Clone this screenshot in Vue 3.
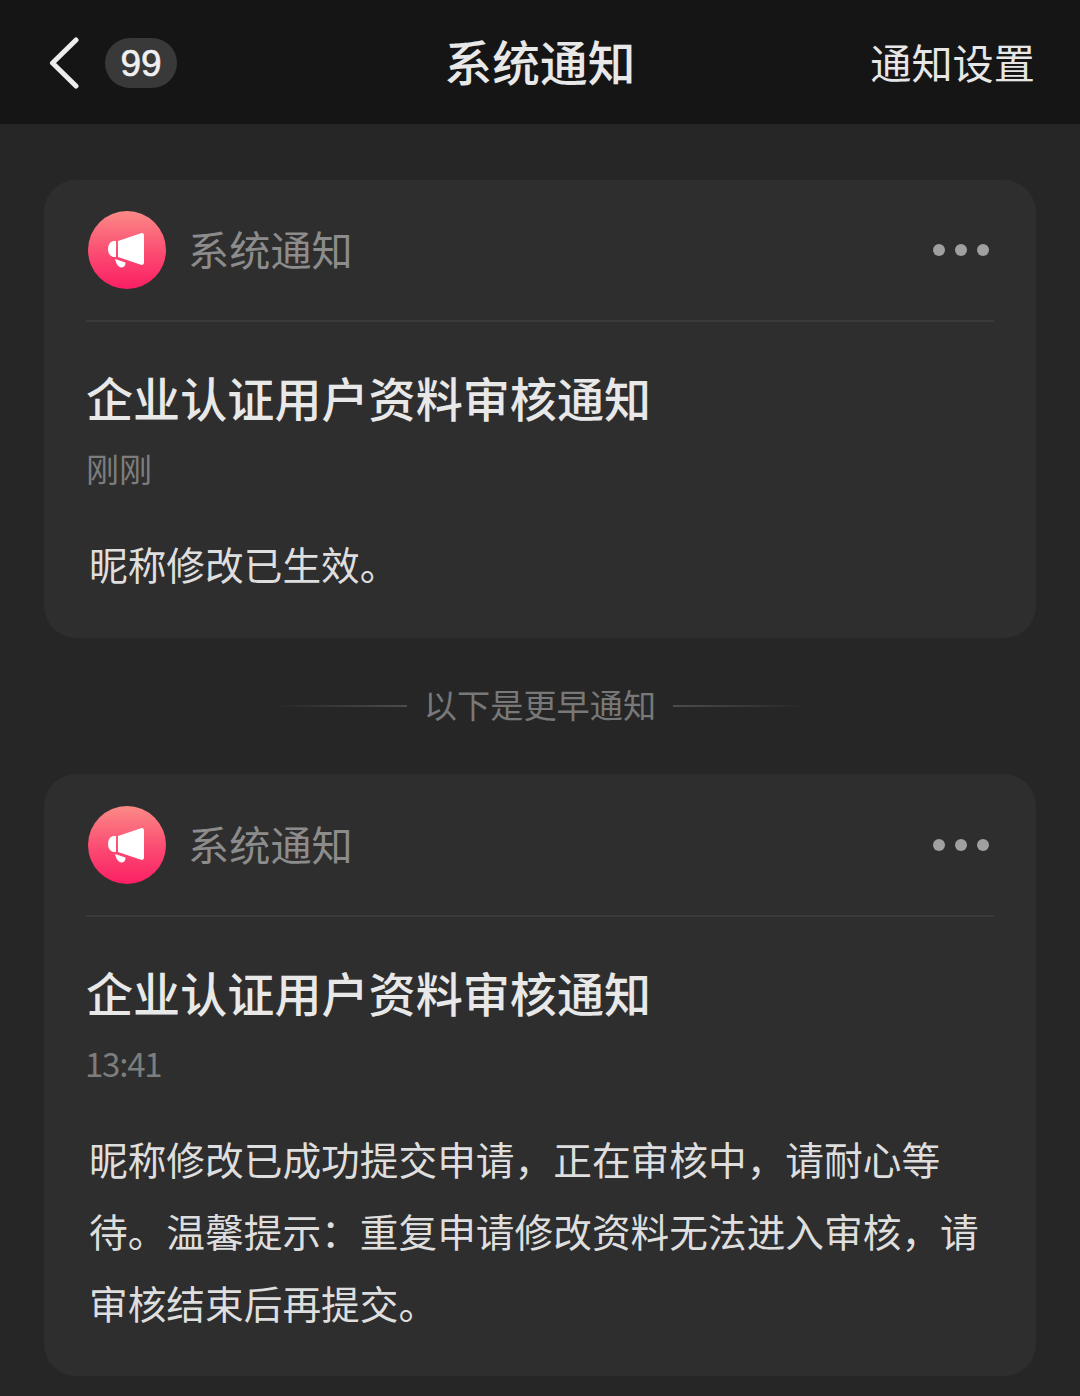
<template>
  <div class="page">
    <header class="topbar">
      <div class="left">
        <svg class="back" width="30" height="52" viewBox="0 0 30 52">
          <path d="M27 3 L3.5 26 L27 49" fill="none" stroke="#ededed" stroke-width="5" stroke-linecap="round" stroke-linejoin="round" />
        </svg>
        <span class="badge">99</span>
      </div>
      <div class="title">系统通知</div>
      <div class="settings">通知设置</div>
    </header>

    <template v-for="(n, i) in notices" :key="i">
      <section class="card">
        <div class="card-head">
          <div class="avatar">
            <svg width="40" height="40" viewBox="0 0 40 40">
              <path d="M11 11 L34 3.2 Q37 2.6 37 5.5 L37 32.5 Q37 35.4 34 34.8 L11 27 Z" fill="#fff" />
              <path d="M9 11 L9 27 L6 27 Q1 25 1 19 Q1 13 6 11 Z" fill="#fff" />
              <path d="M8 29 L18.5 32.5 Q18.5 37.5 14 37.5 Q10 37 8 29 Z" fill="#fff" />
            </svg>
          </div>
          <span class="source">系统通知</span>
          <div class="dots"><i></i><i></i><i></i></div>
        </div>
        <h2 class="notice-title">企业认证用户资料审核通知</h2>
        <div :class="['time', { digits: n.time.includes(':') }]">{{ n.time }}</div>
        <p class="body">{{ n.body }}</p>
      </section>
      <div v-if="i === 0" class="divider">
        <span class="line line-l"></span>
        <span class="divider-text">以下是更早通知</span>
        <span class="line line-r"></span>
      </div>
    </template>
  </div>
</template>

<script setup>
const notices = [
  { time: '刚刚', body: '昵称修改已生效。' },
  {
    time: '13:41',
    body: '昵称修改已成功提交申请，正在审核中，请耐心等待。温馨提示：重复申请修改资料无法进入审核，请审核结束后再提交。',
  },
];
</script>

<style>
html, body {
  margin: 0;
  background: #262626;
}
</style>

<style scoped>
.page {
  width: 1080px;
  height: 1396px;
  overflow: hidden;
  background: #262626;
  font-family: "Noto Sans CJK SC", "Liberation Sans", sans-serif;
}

.topbar {
  height: 124px;
  background: #151515;
  display: flex;
  align-items: center;
  justify-content: space-between;
  padding: 0 45px 0 49px;
  position: relative;
}

.left {
  display: flex;
  align-items: center;
  gap: 26px;
  margin-top: 2px;
}

.back {
  display: block;
}

.badge {
  width: 72px;
  height: 50px;
  box-sizing: border-box;
  padding-top: 1px;
  border-radius: 25px;
  background: #393939;
  color: #f0f0f0;
  font-family: "Liberation Sans", sans-serif;
  font-size: 37px;
  font-weight: 500;
  display: flex;
  align-items: center;
  justify-content: center;
  -webkit-text-stroke: 0.6px #f0f0f0;
}

.title {
  position: absolute;
  left: 0;
  right: 0;
  top: 27px;
  line-height: 68px;
  text-align: center;
  font-size: 47.7px;
  font-weight: 500;
  color: #e8e8e8;
  pointer-events: none;
}

.settings {
  font-size: 41.2px;
  line-height: 60px;
  margin-bottom: 2px;
  font-weight: 400;
  color: #e6e6e6;
}

.card {
  width: 992px;
  margin: 56px 0 0 44px;
  box-sizing: border-box;
  background: #2e2e2e;
  border-radius: 32px;
  padding: 30px 42px 39px;
}

.divider + .card {
  margin-top: 0;
  padding-top: 31px;
  padding-bottom: 38px;
}

.card-head {
  display: flex;
  align-items: center;
  height: 112px;
  padding-bottom: 30px;
  box-sizing: border-box;
  border-bottom: 2px solid #3a3a3a;
}

.avatar {
  width: 78px;
  height: 78px;
  border-radius: 50%;
  margin-left: 2px;
  background: linear-gradient(180deg, #fb8a86 0%, #fb4a72 55%, #fb1f63 100%);
  display: flex;
  align-items: center;
  justify-content: center;
}

.avatar svg {
  display: block;
}

.source {
  margin-left: 22px;
  margin-bottom: 5px;
  font-size: 41.2px;
  font-weight: 400;
  color: #8c8c8c;
}

.dots {
  margin-left: auto;
  margin-right: 5px;
  display: flex;
  gap: 10px;
}

.dots i {
  width: 12px;
  height: 12px;
  border-radius: 50%;
  background: #a0a0a0;
}

.notice-title {
  margin: 42px 0 0;
  font-size: 47.1px;
  line-height: 66px;
  font-weight: 500;
  color: #e8e8e8;
}

.time {
  margin: 18px 0 0;
  font-size: 33px;
  line-height: 40px;
  font-weight: 400;
  color: #7d7d7d;
}

.time.digits {
  margin-left: -1px;
  letter-spacing: -1.2px;
}

.body {
  margin: 39px 0 0 3px;
  font-size: 38.7px;
  line-height: 72px;
  font-weight: 400;
  color: #dedede;
}

.divider {
  height: 136px;
  display: flex;
  align-items: center;
  justify-content: center;
  gap: 17px;
}

.divider-text {
  margin-bottom: 6px;
  font-size: 33.2px;
  font-weight: 400;
  color: #787878;
}

.line {
  width: 135px;
  height: 2px;
}

.line-l {
  background: linear-gradient(90deg, transparent, #4c4c4c);
}

.line-r {
  background: linear-gradient(90deg, #4c4c4c, transparent);
}
</style>
